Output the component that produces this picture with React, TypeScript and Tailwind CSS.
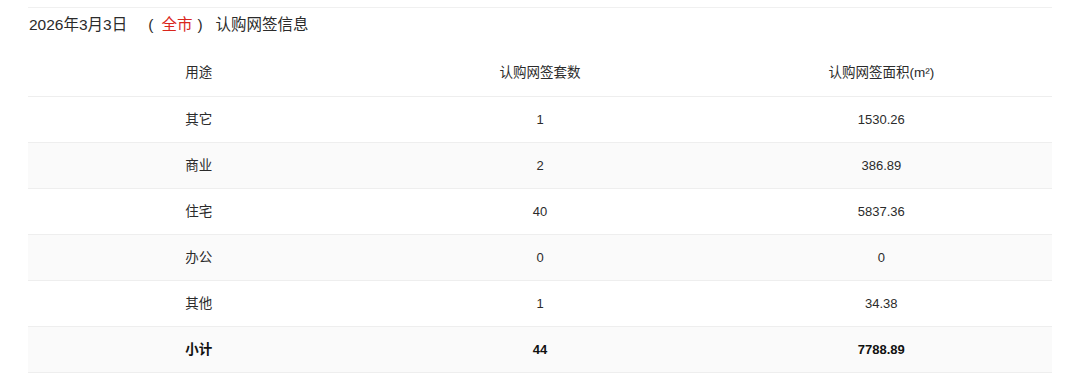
import React from "react";

const rows = [
  { name: "其它", count: "1", area: "1530.26" },
  { name: "商业", count: "2", area: "386.89" },
  { name: "住宅", count: "40", area: "5837.36" },
  { name: "办公", count: "0", area: "0" },
  { name: "其他", count: "1", area: "34.38" },
];

export default function App() {
  return (
    <div
      className="w-[1080px] h-[378px] bg-white text-[#333] overflow-hidden"
      style={{ fontFamily: '"Liberation Sans", "Noto Sans CJK SC", sans-serif' }}
    >
      <div className="ml-[28px] w-[1024px] pt-[7px]">
        <div className="border-t border-[#f0f0f0]" />
        <div className="h-[34px] flex items-center pl-[1px] text-[15.5px] text-[#2b2b2b]">
          <span>2026年3月3日</span>
          <span className="ml-[21px]">(</span>
          <span className="ml-[8px] text-[#d9261c]">全市</span>
          <span className="ml-[5px]">)</span>
          <span className="ml-[13px]">认购网签信息</span>
        </div>
        <div className="mt-[8px] text-[13px] text-[#2b2b2b]">
          <div className="grid grid-cols-3 h-[47px] items-center text-center border-b border-[#eeeeee] pb-[1px] text-[13.5px] pt-[2px]">
            <div>用途</div>
            <div>认购网签套数</div>
            <div>认购网签面积(m²)</div>
          </div>
          {rows.map((r, i) => (
            <div
              key={r.name}
              className={
                i % 2 === 1
                  ? "grid grid-cols-3 h-[46px] items-center text-center border-b border-[#eeeeee] bg-[#fafafa]"
                  : "grid grid-cols-3 h-[46px] items-center text-center border-b border-[#eeeeee] bg-white"
              }
            >
              <div className="text-[13.5px] pt-[2px]">{r.name}</div>
              <div>{r.count}</div>
              <div>{r.area}</div>
            </div>
          ))}
          <div className="grid grid-cols-3 h-[46px] items-center text-center border-b border-[#eeeeee] bg-[#fafafa] font-bold text-[#111]">
            <div className="text-[13.5px] pt-[2px]">小计</div>
            <div>44</div>
            <div>7788.89</div>
          </div>
        </div>
      </div>
    </div>
  );
}
